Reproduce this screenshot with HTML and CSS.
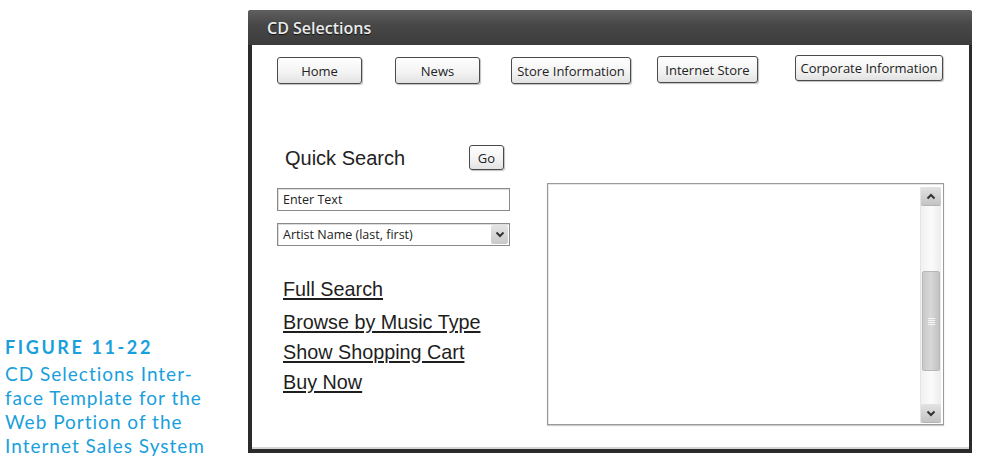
FILE: index.html
```html
<!DOCTYPE html>
<html>
<head>
<meta charset="utf-8">
<link rel="stylesheet" href="styles.css">
</head>
<body>
<div class="page">
  <div class="caption">
    <div class="fig-num">FIGURE 11-22</div>
    <div class="fig-text">CD Selections Inter-<br>face Template for the<br>Web Portion of the<br>Internet Sales System</div>
  </div>
  <div class="window">
    <div class="titlebar">CD Selections</div>
    <div class="content">
      <div class="nav">
        <div class="btn b-home">Home</div>
        <div class="btn b-news">News</div>
        <div class="btn b-store">Store Information</div>
        <div class="btn b-inet">Internet Store</div>
        <div class="btn b-corp">Corporate Information</div>
      </div>
      <div class="main">
        <div class="left">
          <div class="qs-row">
            <span class="qs-title">Quick Search</span>
            <span class="btn go">Go</span>
          </div>
          <div class="field input">Enter Text</div>
          <div class="field select">
            <span class="sel-text">Artist Name (last, first)</span>
            <span class="sel-arrow">
              <svg width="10" height="7" viewBox="0 0 10 7"><path d="M1.5 1.5 L5 5 L8.5 1.5" fill="none" stroke="#333" stroke-width="2"/></svg>
            </span>
          </div>
          <div class="links">
            <a class="lnk first">Full Search</a>
            <a class="lnk">Browse by Music Type</a>
            <a class="lnk">Show Shopping Cart</a>
            <a class="lnk">Buy Now</a>
          </div>
        </div>
        <div class="textarea">
          <div class="ta-body"></div>
          <div class="scroll">
            <div class="sb-btn">
              <svg width="10" height="7" viewBox="0 0 10 7"><path d="M1.5 5.5 L5 2 L8.5 5.5" fill="none" stroke="#333" stroke-width="2"/></svg>
            </div>
            <div class="track">
              <div class="thumb">
                <span class="grip"></span>
              </div>
            </div>
            <div class="sb-btn">
              <svg width="10" height="7" viewBox="0 0 10 7"><path d="M1.5 1.5 L5 5 L8.5 1.5" fill="none" stroke="#333" stroke-width="2"/></svg>
            </div>
          </div>
        </div>
      </div>
    </div>
  </div>
</div>
</body>
</html>
```
FILE: styles.css
```css
html, body {
  margin: 0;
  padding: 0;
  background: #fff;
}
.page {
  display: grid;
  grid-template-columns: 248px 724px;
  height: 468px;
  width: 982px;
}
.caption {
  display: flex;
  flex-direction: column;
  justify-content: flex-end;
  padding: 0 0 10px 5px;
  font-family: Lato, "Open Sans", sans-serif;
  color: #19a0dc;
}
.fig-num {
  font-weight: 700;
  font-size: 18px;
  letter-spacing: 2.6px;
  line-height: 22px;
  margin-bottom: 4px;
}
.fig-text {
  font-size: 19px;
  line-height: 24px;
  letter-spacing: 1px;
}
.window {
  margin-top: 10px;
  height: 443px;
  display: flex;
  flex-direction: column;
  background: #2b2b2b;
  border-radius: 3px 3px 0 0;
  font-family: "Open Sans", "Liberation Sans", sans-serif;
}
.titlebar {
  height: 35px;
  flex: none;
  box-sizing: border-box;
  padding-left: 19px;
  display: flex;
  align-items: center;
  color: #ececec;
  font-size: 16px;
  font-weight: 600;
  text-shadow: 0 1px 1px #111;
  background: linear-gradient(#606060, #484848 40%, #3c3c3c);
  border-radius: 3px 3px 0 0;
}
.content {
  flex: 1;
  margin: 0 3px 4px 4px;
  background: #fff;
  box-shadow: inset 0 -2px 0 #d6d6d6;
  padding: 10px 0 0 25px;
}
.nav {
  display: flex;
  align-items: flex-start;
}
.btn {
  box-sizing: border-box;
  height: 27px;
  display: flex;
  align-items: center;
  justify-content: center;
  border: 1px solid #4a4a4a;
  border-radius: 3px;
  background: linear-gradient(#ffffff, #f2f2f2 60%, #e2e2e2);
  box-shadow: 1px 1px 1px rgba(0,0,0,0.25);
  font-size: 13px;
  color: #222;
  font-family: "Open Sans", "Liberation Sans", sans-serif;
}
.b-home { width: 85px; margin-top: 2px; }
.b-news { width: 85px; margin-top: 2px; margin-left: 33px; }
.b-store { width: 120px; margin-top: 2px; margin-left: 31px; }
.b-inet { width: 101px; margin-top: 1px; margin-left: 26px; }
.b-corp { width: 148px; height: 26px; margin-left: 37px; }
.main {
  display: grid;
  grid-template-columns: 233px 397px;
  column-gap: 37px;
  margin-top: 61px;
  align-items: start;
}
.left {
  display: flex;
  flex-direction: column;
}
.qs-row {
  display: flex;
  align-items: center;
  justify-content: space-between;
  height: 25px;
  padding: 0 6px 0 8px;
}
.qs-title {
  font-family: "Liberation Sans", Arial, sans-serif;
  font-size: 20px;
  color: #222;
  margin-top: 2px;
}
.go {
  width: 35px;
  height: 25px;
  font-size: 13px;
}
.field {
  box-sizing: border-box;
  height: 23px;
  border: 1px solid #8a8a8a;
  box-shadow: inset 1px 1px 0 #ddd;
  font-size: 12.5px;
  color: #222;
  display: flex;
  align-items: center;
  padding-left: 5px;
}
.input {
  margin-top: 18px;
}
.select {
  margin-top: 12px;
  justify-content: space-between;
  padding-right: 1px;
}
.sel-arrow {
  width: 17px;
  height: 19px;
  display: flex;
  align-items: center;
  justify-content: center;
  background: linear-gradient(#e4e4e4, #c9c9c9);
  border-radius: 2px;
}
.links {
  display: flex;
  flex-direction: column;
  margin-top: 28px;
  padding-left: 6px;
}
.lnk {
  font-family: "Liberation Sans", Arial, sans-serif;
  font-size: 19.8px;
  line-height: 30px;
  color: #1e1e1e;
  text-decoration: underline;
  text-decoration-thickness: 2px;
  text-underline-offset: 2px;
}
.lnk.first {
  margin-bottom: 3px;
}
.textarea {
  margin-top: 38px;
  box-sizing: border-box;
  height: 242px;
  border: 1px solid #9a9a9a;
  box-shadow: inset 1px 1px 0 #e6e6e6, 0 1px 1px #ccc;
  display: flex;
  padding: 3px 2px 1px 0;
}
.ta-body {
  flex: 1;
}
.scroll {
  width: 20px;
  display: flex;
  flex-direction: column;
  background: linear-gradient(90deg, #f0f0f0, #fbfbfb 50%, #ececec);
  border-left: 1px solid #e4e4e4;
}
.sb-btn {
  height: 18px;
  flex: none;
  display: flex;
  align-items: center;
  justify-content: center;
  background: linear-gradient(#e2e2e2, #c4c4c4);
  border-radius: 2px;
  border-bottom: 1px solid #b4b4b4;
}
.track {
  flex: 1;
}
.thumb {
  margin-top: 65px;
  height: 98px;
  margin-left: 1px;
  margin-right: 1px;
  background: linear-gradient(90deg, #c9c9c9, #d8d8d8 50%, #c2c2c2);
  border: 1px solid #b8b8b8;
  border-radius: 2px;
  display: flex;
  align-items: center;
  justify-content: center;
}
.grip {
  width: 7px;
  height: 7px;
  background: repeating-linear-gradient(#f4f4f4 0 1px, transparent 1px 2px);
}
```
